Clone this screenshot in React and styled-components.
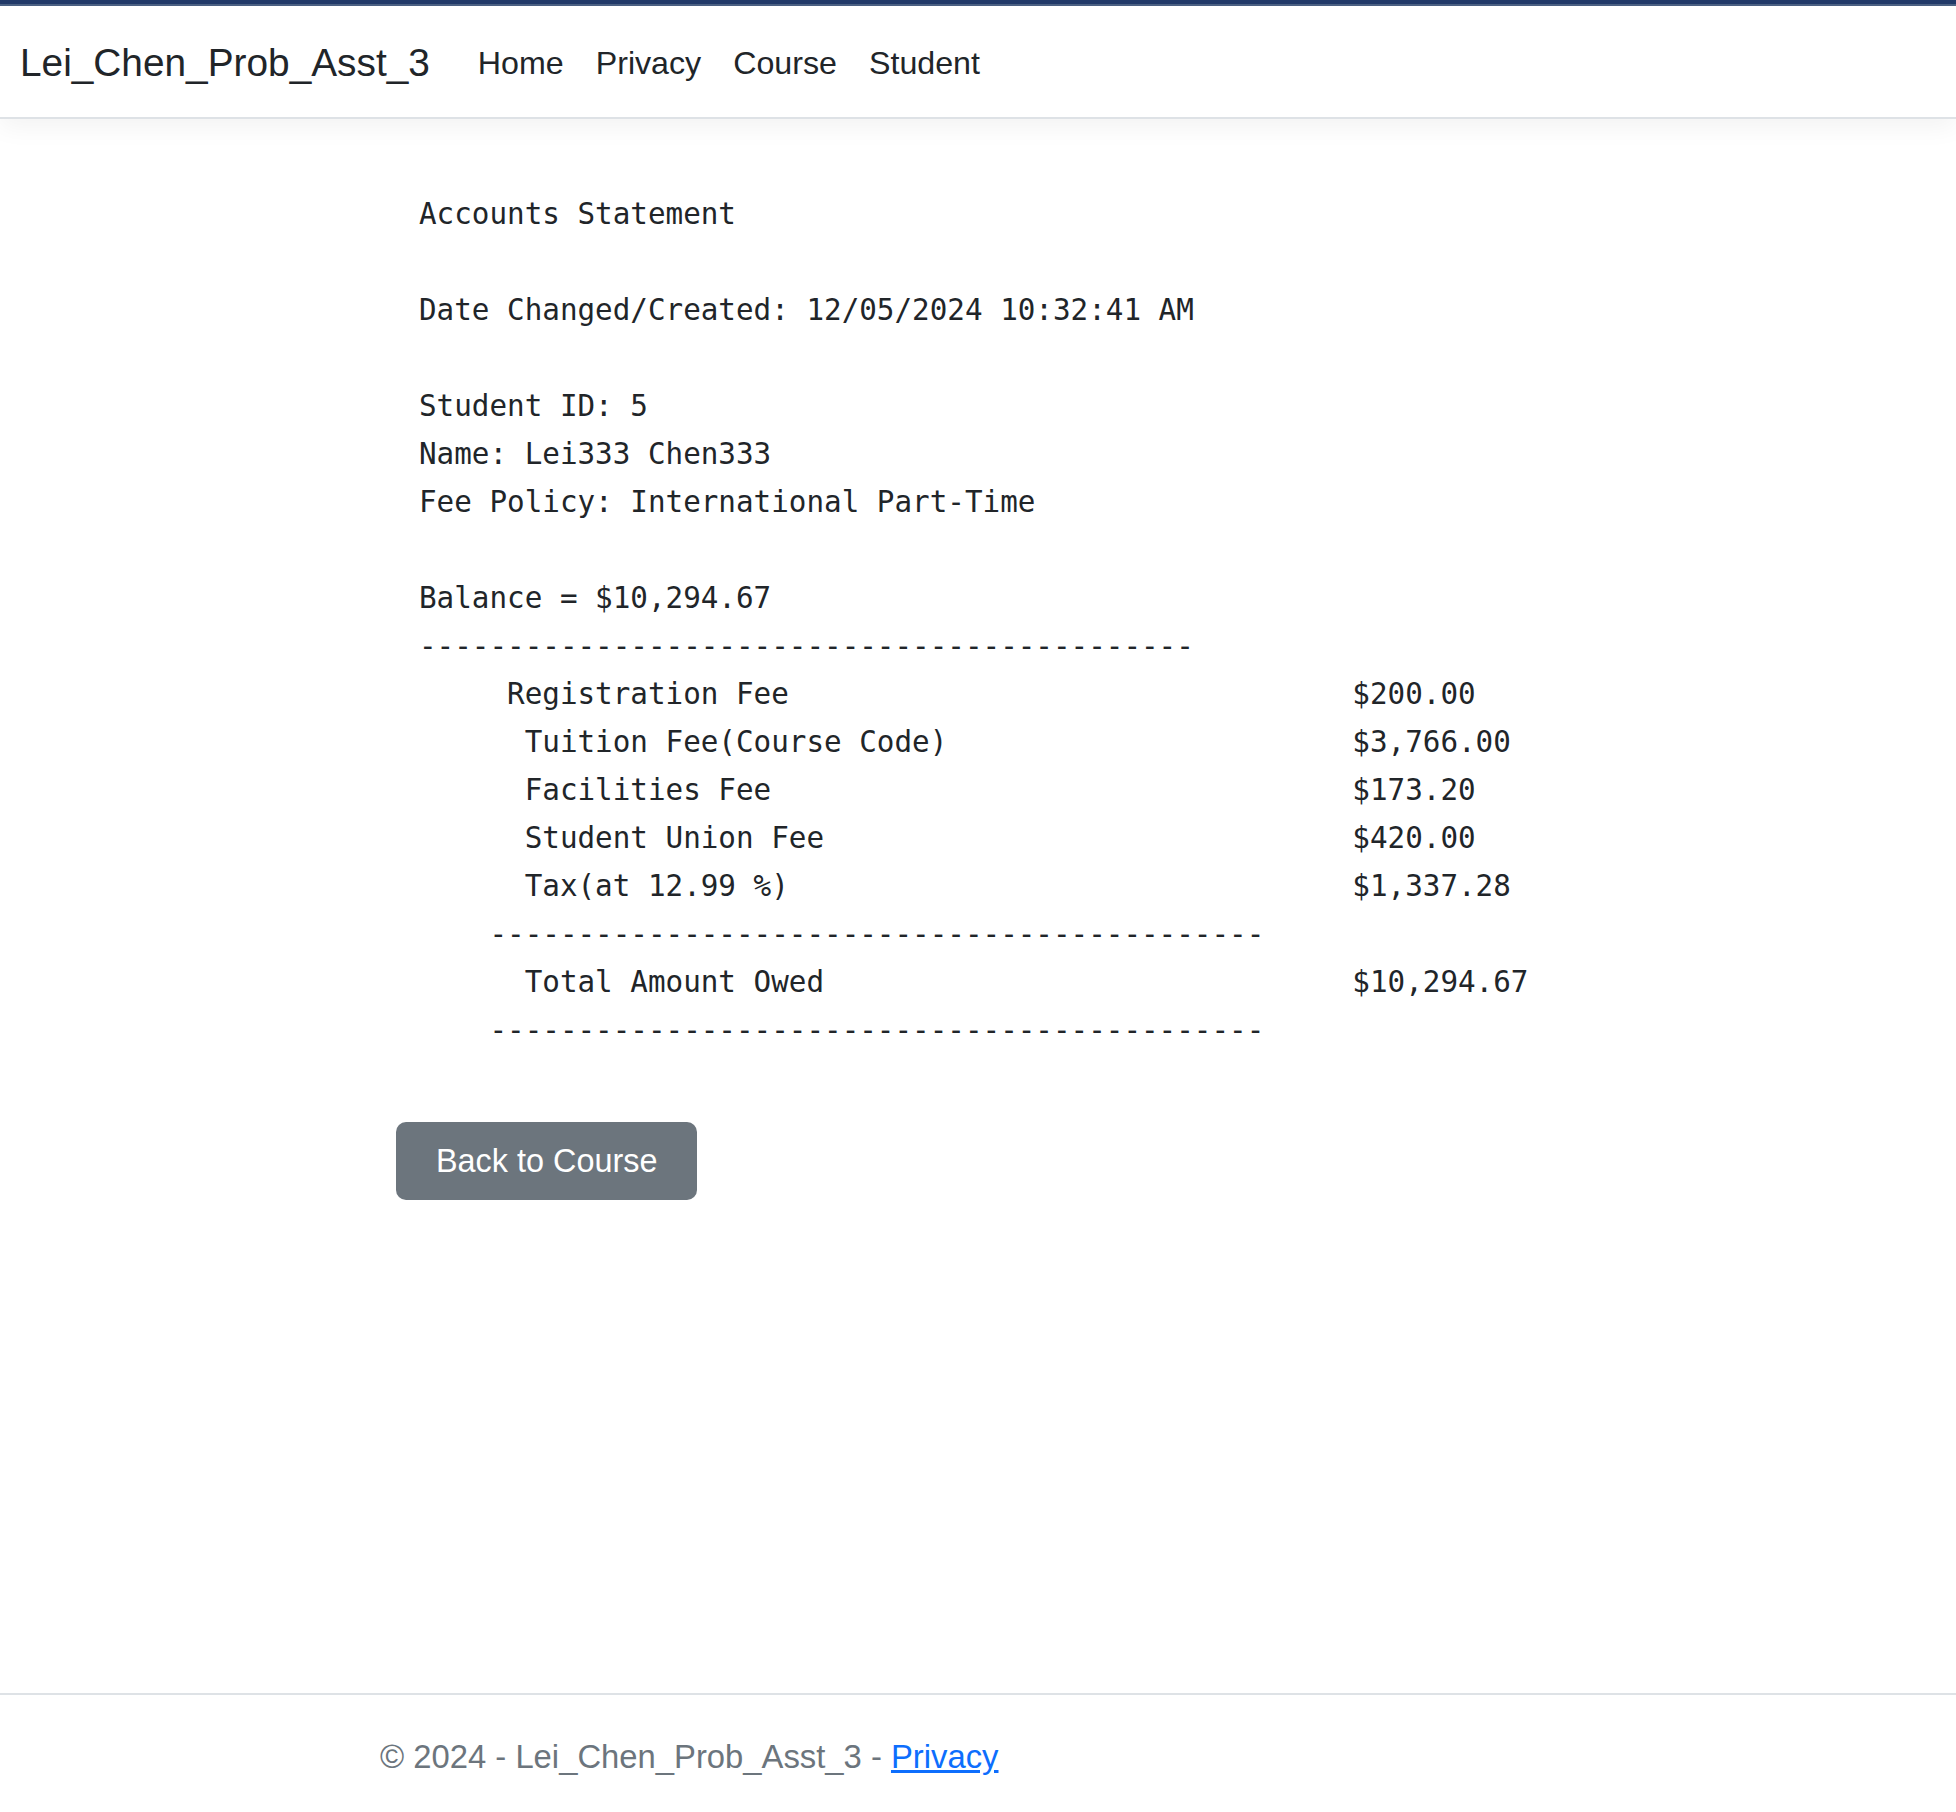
import styled, { createGlobalStyle } from 'styled-components';

const GlobalStyle = createGlobalStyle`
  html, body {
    margin: 0;
    padding: 0;
    background: #fff;
  }
  body {
    font-family: "Liberation Sans", Arial, sans-serif;
    color: #212529;
  }
  * {
    box-sizing: border-box;
  }
`;

const Page = styled.div`
  min-height: 100vh;
  display: flex;
  flex-direction: column;
`;

const TopStrip = styled.div`
  height: 6px;
  background: #223a69;
  border-bottom: 2px solid #4b6184;
`;

const Navbar = styled.nav`
  height: 113px;
  display: flex;
  align-items: center;
  padding: 3px 20px 0;
  background: #fff;
  border-bottom: 2px solid #dee2e6;
  box-shadow: 0 8px 24px rgba(0, 0, 0, 0.05);
`;

const Brand = styled.a`
  font-size: 38.8px;
  color: #212529;
  text-decoration: none;
  margin-right: 32px;
`;

const NavList = styled.ul`
  display: flex;
  list-style: none;
  margin: 0;
  padding: 0;
`;

const NavLink = styled.a`
  display: block;
  padding: 0 16px;
  font-size: 32.2px;
  color: #212529;
  text-decoration: none;
`;

const Main = styled.main`
  flex: 1;
  padding: 71px 0 0 396px;
`;

const Statement = styled.div`
  margin-left: 23px;
  font-family: "DejaVu Sans Mono", "Liberation Mono", monospace;
  font-size: 29.25px;
  line-height: 48px;
  color: #212529;
  white-space: pre;
`;

const Line = styled.div`
  height: 48px;
  padding-left: ${(p) => p.indent || 0}ch;
`;

const FeeRow = styled.div`
  display: grid;
  grid-template-columns: 53ch 1fr;
  height: 48px;
`;

const FeeLabel = styled.span`
  padding-left: ${(p) => p.indent}ch;
`;

const BackButton = styled.button`
  margin-top: 68px;
  padding: 15px 40px;
  font-family: "Liberation Sans", Arial, sans-serif;
  font-size: 32.4px;
  line-height: 48px;
  color: #fff;
  background: #6c757d;
  border: none;
  border-radius: 10px;
  cursor: pointer;
`;

const Footer = styled.footer`
  border-top: 2px solid #dee2e6;
  height: 119px;
  line-height: 117px;
  padding: 3px 0 0 380px;
  font-size: 32.8px;
  color: #6c757d;
`;

const FooterLink = styled.a`
  color: #0d6efd;
  text-decoration: underline;
`;

const DASHES = '--------------------------------------------';

const fees = [
  { label: 'Registration Fee', amount: '$200.00', indent: 5 },
  { label: 'Tuition Fee(Course Code)', amount: '$3,766.00', indent: 6 },
  { label: 'Facilities Fee', amount: '$173.20', indent: 6 },
  { label: 'Student Union Fee', amount: '$420.00', indent: 6 },
  { label: 'Tax(at 12.99 %)', amount: '$1,337.28', indent: 6 },
];

export default function App() {
  return (
    <Page>
      <GlobalStyle />
      <TopStrip />
      <Navbar>
        <Brand href="#">Lei_Chen_Prob_Asst_3</Brand>
        <NavList>
          <li><NavLink href="#">Home</NavLink></li>
          <li><NavLink href="#">Privacy</NavLink></li>
          <li><NavLink href="#">Course</NavLink></li>
          <li><NavLink href="#">Student</NavLink></li>
        </NavList>
      </Navbar>
      <Main>
        <Statement>
          <Line>Accounts Statement</Line>
          <Line />
          <Line>Date Changed/Created: 12/05/2024 10:32:41 AM</Line>
          <Line />
          <Line>Student ID: 5</Line>
          <Line>Name: Lei333 Chen333</Line>
          <Line>Fee Policy: International Part-Time</Line>
          <Line />
          <Line>Balance = $10,294.67</Line>
          <Line>{DASHES}</Line>
          {fees.map((f) => (
            <FeeRow key={f.label}>
              <FeeLabel indent={f.indent}>{f.label}</FeeLabel>
              <span>{f.amount}</span>
            </FeeRow>
          ))}
          <Line indent={4}>{DASHES}</Line>
          <FeeRow>
            <FeeLabel indent={6}>Total Amount Owed</FeeLabel>
            <span>$10,294.67</span>
          </FeeRow>
          <Line indent={4}>{DASHES}</Line>
        </Statement>
        <BackButton type="button">Back to Course</BackButton>
      </Main>
      <Footer>
        © 2024 - Lei_Chen_Prob_Asst_3 - <FooterLink href="#">Privacy</FooterLink>
      </Footer>
    </Page>
  );
}
